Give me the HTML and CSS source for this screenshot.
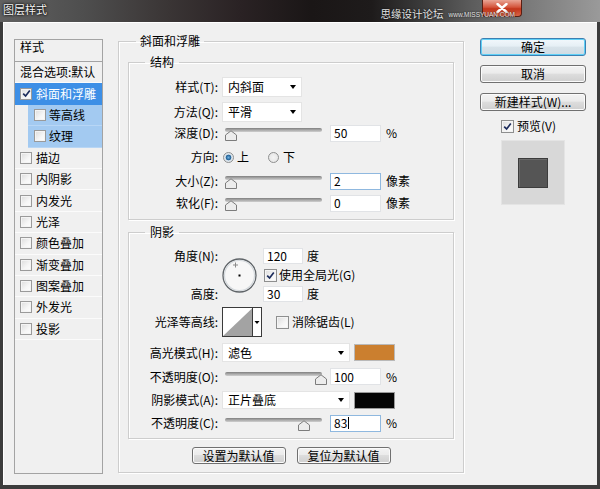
FILE: index.html
```html
<!DOCTYPE html>
<html lang="zh-CN">
<head>
<meta charset="utf-8">
<title>图层样式</title>
<link rel="stylesheet" href="styles.css">
</head>
<body>
<div class="window">
  <div class="titlebar">
    <span class="title">图层样式</span>
    <span class="wm"><span class="wm-cn">思缘设计论坛</span><span class="wm-en">www.MISSYUAN.COM</span></span>
    <span class="close"><svg width="14" height="10" viewBox="0 0 14 10"><path d="M2.5 1 L11.5 9 M11.5 1 L2.5 9" stroke="#fff" stroke-width="2.4" stroke-linecap="round"/></svg></span>
  </div>
  <div class="body">
    <div class="sidebar">
      <div class="sb-head">样式</div>
      <div class="sb-row">混合选项:默认</div>
      <div class="sb-row sel"><span class="cb sm"><svg width="9" height="9" viewBox="0 0 9 9"><path d="M1.2 4.6 L3.6 7 L7.8 1.6" fill="none" stroke="#1c2c5c" stroke-width="1.7"/></svg></span>斜面和浮雕</div>
      <div class="sb-row sub"><span class="cb sm"></span>等高线</div>
      <div class="sb-row sub"><span class="cb sm"></span>纹理</div>
      <div class="sb-row"><span class="cb sm"></span>描边</div>
      <div class="sb-row"><span class="cb sm"></span>内阴影</div>
      <div class="sb-row"><span class="cb sm"></span>内发光</div>
      <div class="sb-row"><span class="cb sm"></span>光泽</div>
      <div class="sb-row"><span class="cb sm"></span>颜色叠加</div>
      <div class="sb-row"><span class="cb sm"></span>渐变叠加</div>
      <div class="sb-row"><span class="cb sm"></span>图案叠加</div>
      <div class="sb-row"><span class="cb sm"></span>外发光</div>
      <div class="sb-row"><span class="cb sm"></span>投影</div>
    </div>

    <div class="main">
      <fieldset class="outer">
        <legend class="lg-outer">斜面和浮雕</legend>

        <fieldset class="inner struct">
          <legend class="lg-inner">结构</legend>
          <div class="row s1">
            <span class="lbl">样式(T):</span>
            <span class="select w80"><span>内斜面</span><span class="arrow"></span></span>
          </div>
          <div class="row s2">
            <span class="lbl">方法(Q):</span>
            <span class="select w80"><span>平滑</span><span class="arrow"></span></span>
          </div>
          <div class="row s3">
            <span class="lbl">深度(D):</span>
            <span class="slider"><span class="track"></span><span class="thumb" style="left:3px"><svg width="12" height="11" viewBox="0 0 12 11"><path d="M0.5 5 L6 0.8 L11.5 5 L11.5 10.5 L0.5 10.5 Z" fill="#ececec" stroke="#7c7c7c"/></svg></span></span>
            <span class="input">50</span><span class="unit">%</span>
          </div>
          <div class="row s4">
            <span class="lbl">方向:</span>
            <span class="radio on"></span><span class="rtext">上</span>
            <span class="radio r2"></span><span class="rtext r2t">下</span>
          </div>
          <div class="row s5">
            <span class="lbl">大小(Z):</span>
            <span class="slider"><span class="track"></span><span class="thumb" style="left:3px"><svg width="12" height="11" viewBox="0 0 12 11"><path d="M0.5 5 L6 0.8 L11.5 5 L11.5 10.5 L0.5 10.5 Z" fill="#ececec" stroke="#7c7c7c"/></svg></span></span>
            <span class="input focus">2</span><span class="unit">像素</span>
          </div>
          <div class="row s6">
            <span class="lbl">软化(F):</span>
            <span class="slider"><span class="track"></span><span class="thumb" style="left:3px"><svg width="12" height="11" viewBox="0 0 12 11"><path d="M0.5 5 L6 0.8 L11.5 5 L11.5 10.5 L0.5 10.5 Z" fill="#ececec" stroke="#7c7c7c"/></svg></span></span>
            <span class="input">0</span><span class="unit">像素</span>
          </div>
        </fieldset>

        <fieldset class="inner shadow">
          <legend class="lg-inner">阴影</legend>
          <div class="angle">
            <span class="glbl g1">角度(N):</span>
            <span class="dial"><svg width="35" height="35" viewBox="0 0 35 35">
              <circle cx="17.5" cy="17.5" r="16.5" fill="#f7f7f7" stroke="#5f6468" stroke-width="1.3"/>
              <circle cx="17.5" cy="17.5" r="15" fill="none" stroke="#d4d9dd" stroke-width="1.2"/>
              <path d="M13.5 4.5 V9.5 M11 7 H16" stroke="#8a8a8a" stroke-width="1"/>
              <rect x="16.5" y="16.5" width="2" height="2" fill="#000"/>
            </svg></span>
            <span class="gfield g1"><span class="input w40">120</span><span class="unit">度</span></span>
            <span class="gfield g2 chk"><span class="cb"><svg width="9" height="9" viewBox="0 0 9 9"><path d="M1.2 4.6 L3.6 7 L7.8 1.6" fill="none" stroke="#1c2c5c" stroke-width="1.7"/></svg></span><span class="ctext">使用全局光(G)</span></span>
            <span class="glbl g3">高度:</span>
            <span class="gfield g3"><span class="input w40">30</span><span class="unit">度</span></span>
          </div>
          <div class="row c1">
            <span class="lbl">光泽等高线:</span>
            <span class="contour"><svg width="40" height="30" viewBox="0 0 40 30">
              <rect x="0.5" y="0.5" width="39" height="29" fill="#fff" stroke="#3a3a3a"/>
              <path d="M1 29 L30.5 1 L30.5 29 Z" fill="#a3a3a3"/>
              <path d="M30.5 0.5 V29.5" stroke="#3a3a3a"/>
              <path d="M32.5 14 H37.5 L35 17 Z" fill="#000"/>
            </svg></span>
            <span class="cb aa"></span><span class="ctext">消除锯齿(L)</span>
          </div>
          <div class="row c2">
            <span class="lbl">高光模式(H):</span>
            <span class="select w128"><span>滤色</span><span class="arrow"></span></span>
            <span class="swatch orange"></span>
          </div>
          <div class="row c3">
            <span class="lbl">不透明度(O):</span>
            <span class="slider"><span class="track"></span><span class="thumb" style="left:93px"><svg width="12" height="11" viewBox="0 0 12 11"><path d="M0.5 5 L6 0.8 L11.5 5 L11.5 10.5 L0.5 10.5 Z" fill="#ececec" stroke="#7c7c7c"/></svg></span></span>
            <span class="input">100</span><span class="unit">%</span>
          </div>
          <div class="row c4">
            <span class="lbl">阴影模式(A):</span>
            <span class="select w128"><span>正片叠底</span><span class="arrow"></span></span>
            <span class="swatch black"></span>
          </div>
          <div class="row c5">
            <span class="lbl">不透明度(C):</span>
            <span class="slider"><span class="track"></span><span class="thumb" style="left:76px"><svg width="12" height="11" viewBox="0 0 12 11"><path d="M0.5 5 L6 0.8 L11.5 5 L11.5 10.5 L0.5 10.5 Z" fill="#ececec" stroke="#7c7c7c"/></svg></span></span>
            <span class="input focus">83<span class="caret"></span></span><span class="unit">%</span>
          </div>
        </fieldset>

        <div class="btnrow">
          <span class="btn wide">设置为默认值</span>
          <span class="btn wide">复位为默认值</span>
        </div>
      </fieldset>
    </div>

    <div class="actions">
      <span class="btn default">确定</span>
      <span class="btn b-cancel">取消</span>
      <span class="btn b-new">新建样式(W)...</span>
      <div class="preview-check"><span class="cb"><svg width="9" height="9" viewBox="0 0 9 9"><path d="M1.2 4.6 L3.6 7 L7.8 1.6" fill="none" stroke="#1c2c5c" stroke-width="1.7"/></svg></span><span class="ctext">预览(V)</span></div>
      <div class="preview"><div class="pv-square"></div></div>
    </div>
  </div>
</div>
</body>
</html>
```

FILE: styles.css
```css
* { box-sizing: border-box; }
html, body { margin: 0; padding: 0; }
body {
  width: 600px;
  height: 489px;
  overflow: hidden;
  background: #2e2e2e;
  font-family: "Noto Sans CJK SC", "Microsoft YaHei", sans-serif;
  font-size: 12px;
  line-height: 14px;
  color: #000;
}
.window {
  width: 600px;
  height: 489px;
  display: flex;
  flex-direction: column;
  background: #3c3c3c;
}

/* title bar */
.titlebar {
  position: relative;
  height: 22px;
  flex: none;
  display: flex;
  align-items: flex-start;
  background: linear-gradient(90deg, #616161 0%, #4e4e4e 14%, #3a3535 28%, #2a2224 40%, #1a1616 52%, #1e1b1b 62%, #3a3a3a 70%, #5a5a5a 78%, #7a7a7a 88%, #9a9a9a 100%);
}
.title {
  padding: 2px 0 0 3px;
  font-size: 11px;
  line-height: 14px;
  color: #f4f4f4;
  text-shadow: 0 0 2px #000, 0 0 3px #000;
}
.wm {
  position: relative;
  z-index: 1;
  margin-left: auto;
  margin-right: 85px;
  padding-top: 7px;
  display: flex;
  align-items: flex-end;
  color: #e4e4e4;
  text-shadow: 0 0 2px #000;
}
.wm-cn { font-size: 10.5px; line-height: 13px; }
.wm-en {
  margin-left: 5px;
  font-family: "Liberation Sans", sans-serif;
  font-size: 6.5px;
  line-height: 8px;
  padding-bottom: 1px;
}
.close {
  position: absolute;
  left: 482px;
  top: 0;
  width: 40px;
  height: 17px;
  display: flex;
  align-items: center;
  justify-content: center;
  border: 1px solid #5a1e12;
  border-top: 0;
  border-radius: 0 0 4px 4px;
  background: linear-gradient(#e9a595 0%, #d4553c 45%, #c2341a 55%, #d96446 100%);
}

/* dialog body */
.body {
  flex: 1;
  margin: 0 3px 4px 3px;
  background: #f0f0f0;
  display: flex;
  align-items: flex-start;
  padding: 12px 0 0 11px;
  box-shadow: inset 1px 1px 0 #fff;
}

/* sidebar */
.sidebar {
  width: 89px;
  height: 435px;
  margin-top: 5px;
  flex: none;
  border: 1px solid #a3a3a3;
  background: #f0f0f0;
}
.sb-head {
  height: 22px;
  padding: 0 0 0 5px;
  border-bottom: 1px solid #a3a3a3;
}
.sb-row {
  height: 21.4px;
  display: flex;
  align-items: center;
  padding-left: 5px;
  border-bottom: 1px solid #fbfbfb;
  white-space: nowrap;
}
.sb-row.sel { background: #3d8fe6; color: #fff; border-bottom-color: #3d8fe6; }
.sb-row.sub { margin-left: 13px; padding-left: 6px; background: #a3caf1; border-bottom-color: #b8d6f5; }
.sb-row .cb { margin-right: 4px; }
.sb-row.sub .cb { margin-right: 3px; }

/* checkboxes / radios */
.cb {
  display: inline-flex;
  align-items: center;
  justify-content: center;
  flex: none;
  width: 13px;
  height: 13px;
  border: 1px solid #8e8f8f;
  background: linear-gradient(135deg, #dcdcdc 0%, #f6f6f6 60%, #fdfdfd 100%);
  box-shadow: inset 0 0 0 1px #f4f4f4;
}
.cb.sm { width: 12px; height: 12px; border-color: #9a9a9a; }
.radio {
  flex: none;
  width: 11px;
  height: 11px;
  margin-left: 1px;
  border-radius: 50%;
  border: 1px solid #8e8f8f;
  background: radial-gradient(circle, #f4f4f4 0%, #e2e2e2 100%);
}
.radio.on {
  background: radial-gradient(circle, #6fb0e0 0%, #1f5f94 2.5px, #d8e2ea 3.2px, #eef2f5 100%);
}
.rtext { margin-left: 3px; }
.radio.r2 { margin-left: 19px; }
.rtext.r2t { margin-left: 4px; }

/* main group boxes */
.main {
  width: 346px;
  margin-left: 15px;
  flex: none;
}
fieldset {
  margin: 0;
  min-width: 0;
  border: 1px solid #cdcdcd;
  box-shadow: 1px 1px 0 #fff, inset 1px 1px 0 #fff;
}
legend {
  padding: 0 4px;
  font-size: 12px;
  line-height: 14px;
}
.outer { padding: 7px 9px 8px 9px; }
.lg-outer { margin-left: 8px; }
.inner { padding: 8px 0 7px 0; }
.lg-inner { margin-left: 16px; padding: 0 5px; }
.shadow { margin-top: 5px; padding: 9px 0 6px 0; }

.row { display: flex; align-items: center; white-space: nowrap; }
.lbl { width: 89px; margin-right: 4px; flex: none; text-align: right; }

.s1 { height: 20px; }
.s2 { height: 20px; margin-top: 5px; }
.s3 { height: 18px; margin-top: 2px; }
.s4 { height: 18px; margin-top: 6px; }
.s5 { height: 18px; margin-top: 6px; }
.s6 { height: 18px; margin-top: 4px; }

.select {
  display: flex;
  align-items: center;
  height: 100%;
  background: #fff;
  border: 1px solid #e4e4e4;
  padding-left: 5px;
}
.select.w80 { width: 80px; }
.select.w128 { width: 128px; }
.arrow {
  margin-left: auto;
  margin-right: 5px;
  width: 0;
  height: 0;
  border-left: 3.5px solid transparent;
  border-right: 3.5px solid transparent;
  border-top: 4px solid #000;
}

.slider {
  position: relative;
  width: 101px;
  height: 100%;
  margin-right: 7px;
  flex: none;
}
.track {
  position: absolute;
  left: 3px;
  right: 1px;
  top: calc(50% - 5px);
  height: 4px;
  border-radius: 2px;
  background: linear-gradient(#7f7f7f 0%, #a9a9a9 50%, #cfcfcf 100%);
}
.thumb {
  position: absolute;
  top: calc(50% - 3px);
  width: 12px;
  height: 11px;
  display: block;
}
.thumb svg { display: block; }

.input {
  display: flex;
  align-items: center;
  width: 51px;
  height: 17px;
  flex: none;
  background: #fff;
  border: 1px solid #e1e3e6;
  padding-left: 3px;
}
.input.w40 { width: 40px; height: 16px; }
.input.focus { border-color: #8fb8df; }
.caret { display: inline-block; width: 1px; height: 12px; background: #000; margin-left: 1px; }
.unit { margin-left: 5px; }

/* angle block */
.angle {
  display: grid;
  grid-template-columns: 89px 41px 1fr;
  grid-template-rows: 16px 22px 16px;
}
.glbl { grid-column: 1; text-align: right; align-self: center; white-space: nowrap; }
.g1 { grid-row: 1; }
.g2 { grid-row: 2; }
.g3 { grid-row: 3; }
.dial { grid-column: 2; grid-row: 1 / 4; align-self: center; margin-left: 4px; height: 35px; }
.dial svg { display: block; }
.gfield { grid-column: 3; display: flex; align-items: center; padding-left: 4px; white-space: nowrap; }
.gfield .unit { margin-left: 4px; }
.gfield.chk { padding-left: 5px; }
.ctext { margin-left: 2px; }

.c1 { height: 30px; margin-top: 5px; }
.c2 { height: 19px; margin-top: 6px; }
.c3 { height: 17px; margin-top: 6px; }
.c4 { height: 18px; margin-top: 6px; }
.c5 { height: 18px; margin-top: 5px; }
.contour { width: 40px; height: 30px; flex: none; }
.contour svg { display: block; }
.cb.aa { margin-left: 14px; }
.c1 .ctext { margin-left: 3px; }

.swatch {
  width: 41px;
  height: 17px;
  margin-left: 4px;
  flex: none;
  border: 1px solid #b9b9b9;
}
.swatch.orange { background: #cb7f2f; }
.swatch.black { background: #050505; border-color: #9a9a9a; }

/* buttons */
.btnrow {
  display: flex;
  justify-content: center;
  gap: 11px;
  margin-top: 8px;
}
.btn {
  display: flex;
  align-items: center;
  justify-content: center;
  height: 18px;
  border: 1px solid #707070;
  border-radius: 3px;
  background: linear-gradient(#f3f3f3 0%, #ebebeb 45%, #dddddd 50%, #cfcfcf 100%);
  box-shadow: inset 0 0 0 1px #fbfbfb;
  white-space: nowrap;
}
.btn.wide { width: 94px; height: 17px; }

.actions {
  width: 106px;
  margin-left: 16px;
  margin-top: 4px;
  flex: none;
  display: flex;
  flex-direction: column;
}
.btn.default {
  border-color: #3c7fb1;
  background: linear-gradient(#f2f8fc 0%, #e6eff5 45%, #d8e3ea 50%, #cfdbe3 100%);
  box-shadow: inset 0 0 0 1px #5fd0f7;
}
.b-cancel { margin-top: 9px; }
.b-new { margin-top: 10px; }
.preview-check {
  display: flex;
  align-items: center;
  height: 14px;
  margin: 8px 0 0 21px;
}
.preview-check .ctext { margin-left: 3px; }
.preview {
  width: 64px;
  height: 65px;
  margin: 7px 0 0 21px;
  display: flex;
  align-items: center;
  justify-content: center;
  background: #d8d8d8;
  box-shadow: inset 0 0 0 1px #e4e4e4;
}
.pv-square {
  width: 30px;
  height: 30px;
  background: #555;
  border: 1px solid #3c3c3c;
  box-shadow: inset 1px 1px 0 #6a6a6a;
}
```
